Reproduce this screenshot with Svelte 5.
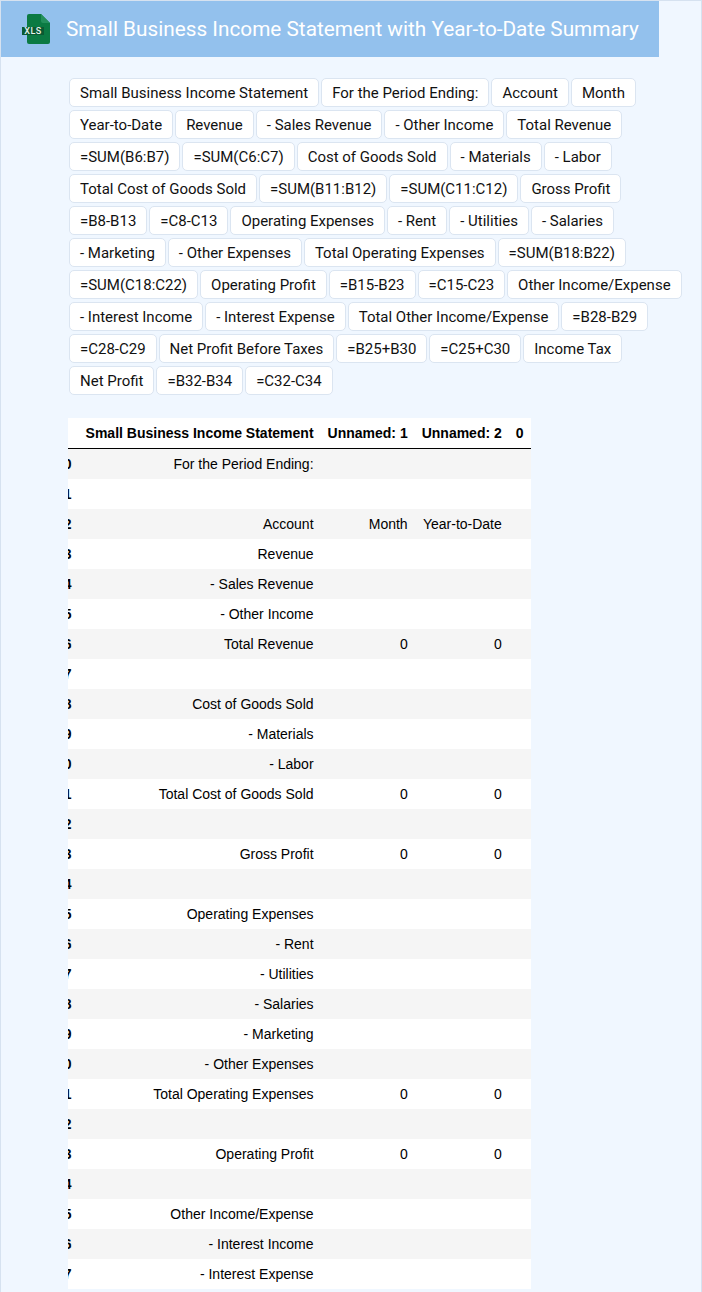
<script lang="ts">
  const chips = [
    'Small Business Income Statement', 'For the Period Ending:', 'Account', 'Month', 'Year-to-Date',
    'Revenue', '- Sales Revenue', '- Other Income', 'Total Revenue', '=SUM(B6:B7)', '=SUM(C6:C7)',
    'Cost of Goods Sold', '- Materials', '- Labor', 'Total Cost of Goods Sold', '=SUM(B11:B12)',
    '=SUM(C11:C12)', 'Gross Profit', '=B8-B13', '=C8-C13', 'Operating Expenses', '- Rent', '- Utilities',
    '- Salaries', '- Marketing', '- Other Expenses', 'Total Operating Expenses', '=SUM(B18:B22)',
    '=SUM(C18:C22)', 'Operating Profit', '=B15-B23', '=C15-C23', 'Other Income/Expense', '- Interest Income',
    '- Interest Expense', 'Total Other Income/Expense', '=B28-B29', '=C28-C29', 'Net Profit Before Taxes',
    '=B25+B30', '=C25+C30', 'Income Tax', 'Net Profit', '=B32-B34', '=C32-C34'
  ]

  const rows: [string, string, string][] = [
    ['For the Period Ending:', '', ''],
    ['', '', ''],
    ['Account', 'Month', 'Year-to-Date'],
    ['Revenue', '', ''],
    ['- Sales Revenue', '', ''],
    ['- Other Income', '', ''],
    ['Total Revenue', '0', '0'],
    ['', '', ''],
    ['Cost of Goods Sold', '', ''],
    ['- Materials', '', ''],
    ['- Labor', '', ''],
    ['Total Cost of Goods Sold', '0', '0'],
    ['', '', ''],
    ['Gross Profit', '0', '0'],
    ['', '', ''],
    ['Operating Expenses', '', ''],
    ['- Rent', '', ''],
    ['- Utilities', '', ''],
    ['- Salaries', '', ''],
    ['- Marketing', '', ''],
    ['- Other Expenses', '', ''],
    ['Total Operating Expenses', '0', '0'],
    ['', '', ''],
    ['Operating Profit', '0', '0'],
    ['', '', ''],
    ['Other Income/Expense', '', ''],
    ['- Interest Income', '', ''],
    ['- Interest Expense', '', '']
  ]
</script>

<div class="page">
  <header class="title-bar">
    <svg class="xls" width="32" height="32" viewBox="0 0 32 32" aria-hidden="true">
      <path d="M9 1h12l9 9v19a2 2 0 0 1-2 2H9a2 2 0 0 1-2-2V3a2 2 0 0 1 2-2z" fill="#0b7a43" />
      <path d="M21 1l9 9h-7a2 2 0 0 1-2-2z" fill="#23905c" />
      <rect x="2" y="14" width="22" height="8" fill="#0a5a33" />
      <text x="13" y="21" text-anchor="middle" class="xls-label">XLS</text>
    </svg>
    <h1>Small Business Income Statement with Year-to-Date Summary</h1>
  </header>

  <div class="chips">
    {#each chips as chip}
      <button type="button">{chip}</button>
    {/each}
  </div>

  <div class="table-wrap">
    <table>
      <thead>
        <tr>
          <th></th>
          <th>Small Business Income Statement</th>
          <th>Unnamed: 1</th>
          <th>Unnamed: 2</th>
          <th>0</th>
        </tr>
      </thead>
      <tbody>
        {#each rows as row, i}
          <tr>
            <th>{i}</th>
            <td>{row[0]}</td>
            <td>{row[1]}</td>
            <td>{row[2]}</td>
            <td></td>
          </tr>
        {/each}
      </tbody>
    </table>
  </div>
</div>

<style>
  :global(body) {
    background: #f0f7ff;
    overflow: hidden;
  }

  .page {
    height: 1292px;
    overflow: hidden;
    border: 1px solid #d6e2f0;
    border-bottom: none;
    box-sizing: border-box;
    font-family: Roboto, sans-serif;
  }

  .title-bar {
    width: 658px;
    height: 56px;
    background: #93c1ed;
    display: flex;
    align-items: center;
    box-sizing: border-box;
    padding-left: 19px;
    gap: 14px;
  }

  .xls {
    flex: none;
  }

  .xls-label {
    font-family: Roboto, sans-serif;
    font-size: 9px;
    font-weight: 500;
    letter-spacing: 0.5px;
    fill: #e8f3ec;
  }

  h1 {
    margin: 0;
    font-size: 20.77px;
    font-weight: 400;
    color: #fff;
    white-space: nowrap;
  }

  .chips {
    display: flex;
    flex-wrap: wrap;
    gap: 3px 2px;
    margin: 21px 0 0 68px;
    width: 620px;
  }

  button {
    height: 29px;
    padding: 0 10px;
    background: #fff;
    border: 1px solid #dbe5f1;
    border-radius: 5px;
    font-family: Roboto, sans-serif;
    font-size: 14.99px;
    color: #111;
  }

  .table-wrap {
    width: 464px;
    margin: 23px 0 0 67px;
    overflow: hidden;
  }

  table {
    margin-left: -19px;
    border-collapse: collapse;
    font-family: "Liberation Sans", sans-serif;
    font-size: 14px;
    color: #000;
    background: #fff;
  }

  thead tr {
    border-bottom: 1px solid #000;
  }

  th,
  td {
    padding: 7px;
    text-align: right;
    line-height: 16px;
    white-space: nowrap;
    font-weight: 400;
  }

  th {
    font-weight: 700;
  }

  tbody tr:nth-child(odd) {
    background: #f5f5f5;
  }
</style>
